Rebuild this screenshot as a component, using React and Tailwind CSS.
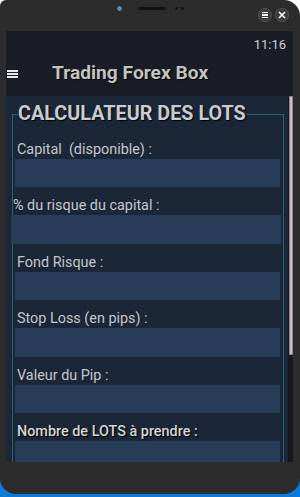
import { useState } from "react";

const fields = [
  { label: "Capital  (disponible) :", shift: false },
  { label: "% du risque du capital :", shift: true },
  { label: "Fond Risque :", shift: false },
  { label: "Stop Loss (en pips) :", shift: false },
  { label: "Valeur du Pip :", shift: false },
  { label: "Nombre de LOTS à prendre :", shift: false, strong: true },
];

const Field = ({ label, shift, strong, value, onChange }) => {
  return (
    <div className="mt-[10px] first:mt-0">
      <div
        className={`h-[18px] leading-[18px] text-[14.4px] whitespace-pre ${
          shift ? "pl-[0px]" : "pl-[4px]"
        } ${
          strong
            ? "text-[#d6d6d6] font-medium [text-shadow:1px_1px_1px_#000]"
            : "text-[#c2c7cd]"
        }`}
      >
        {label}
      </div>
      <input
        type="text"
        value={value}
        onChange={(e) => onChange(e.target.value)}
        className={`block h-[28.4px] bg-[#283d58] outline-none text-[#dde] text-[14px] px-2 ${
          shift ? "-ml-[2px] w-[270px]" : "ml-[2px] w-[265px]"
        }`}
      />
    </div>
  );
};

export default function App() {
  const [values, setValues] = useState(fields.map(() => ""));

  const setValue = (i, v) => {
    const next = [...values];
    next[i] = v;
    setValues(next);
  };

  return (
    <div className="w-[300px] h-[497px] bg-[linear-gradient(to_bottom,#ffffff_50%,#0b7ad9_50%)] font-['Roboto',sans-serif] overflow-hidden">
      <div className="h-[494px] bg-[#2b2c2b] rounded-tl-[6px] rounded-tr-[16px] rounded-b-[16px] flex flex-col">
        {/* top bezel */}
        <div className="h-[31px] relative">
          <div className="absolute left-[116px] top-[5px] w-[7px] h-[7px] rounded-full bg-[#5b8cc4] border border-[#1a1a1a]"></div>
          <div className="absolute left-[138px] top-[7px] w-[28px] h-[3px] rounded-full bg-[#121212]"></div>
          <div className="absolute left-[175px] top-[7px] w-[3px] h-[3px] rounded-full bg-[#121212]"></div>
          <div className="absolute left-[181px] top-[7px] w-[3px] h-[3px] rounded-full bg-[#121212]"></div>
          <div className="absolute left-[258px] top-[8px] w-[14px] h-[14px] rounded-full bg-[#3a3b3a] border border-[#555] flex flex-col items-center justify-center gap-[1px]">
            <span className="block w-[6px] h-[1.5px] bg-white"></span>
            <span className="block w-[6px] h-[1.5px] bg-white"></span>
            <span className="block w-[6px] h-[1.5px] bg-white"></span>
          </div>
          <div className="absolute left-[275px] top-[8px] w-[14px] h-[14px] rounded-full bg-[#3a3b3a] border border-[#555] flex items-center justify-center">
            <svg width="8" height="8" viewBox="0 0 8 8">
              <path d="M1 1L7 7M7 1L1 7" stroke="white" strokeWidth="1.6" />
            </svg>
          </div>
        </div>

        {/* screen */}
        <div className="ml-[6px] w-[287px] h-[431px] flex flex-col overflow-hidden">
          <div className="h-[65px] bg-[#1a1d26] flex flex-col">
            <div className="h-[22px] flex justify-end items-end pr-[7px] text-[13px] leading-[16px] text-[#c9d2d2]">
              11:16
            </div>
            <div className="flex items-center h-[43px] pb-[2px]">
              <div className="ml-[1px] flex flex-col gap-[1px]">
                <span className="block w-[11px] h-[2px] bg-[#e8e8e8]"></span>
                <span className="block w-[11px] h-[2px] bg-[#e8e8e8]"></span>
                <span className="block w-[11px] h-[2px] bg-[#e8e8e8]"></span>
              </div>
              <div className="ml-[34px] text-[19.2px] font-bold text-[#c3c3c3] [text-shadow:1px_1px_1px_#000]">
                Trading Forex Box
              </div>
            </div>
          </div>

          <div className="flex flex-1 min-h-0">
            <div className="w-[282px] bg-[#1b2636] pt-[6px] overflow-hidden">
              <fieldset className="ml-[6px] w-[272px] border border-[#2c5e7c] pb-4">
                <legend className="ml-[5px] pr-[1px] text-[19.8px] leading-[24px] font-bold text-[#c8ccd1] [text-shadow:1px_1px_1px_#000]">
                  CALCULATEUR DES LOTS
                </legend>
                <div className="pt-[15px] pl-[0px]">
                  {fields.map((f, i) => (
                    <Field
                      key={i}
                      label={f.label}
                      shift={f.shift}
                      strong={f.strong}
                      value={values[i]}
                      onChange={(v) => setValue(i, v)}
                    />
                  ))}
                </div>
              </fieldset>
            </div>
            <div className="w-[5px] bg-[#18191d] pl-[1px]">
              <div className="w-[4px] h-[259px] bg-[#cbbfcc] border border-[#8a808a]"></div>
            </div>
          </div>
        </div>
      </div>
    </div>
  );
}
